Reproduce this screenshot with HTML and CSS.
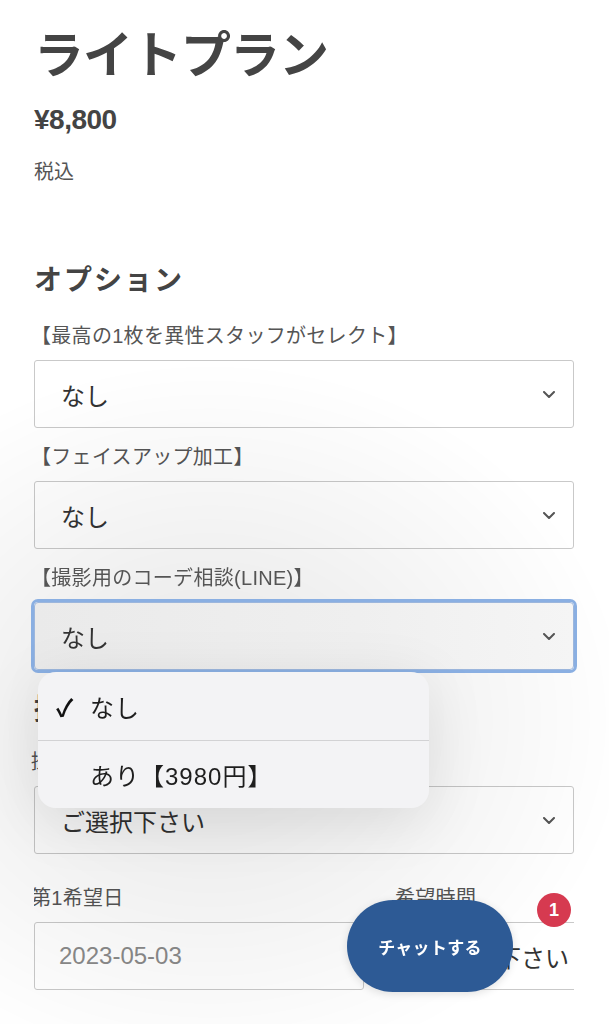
FILE: index.html
```html
<!DOCTYPE html>
<html lang="ja">
<head>
<meta charset="utf-8">
<meta name="viewport" content="width=device-width, initial-scale=1">
<title>ライトプラン</title>
<link rel="stylesheet" href="styles.css">
</head>
<body>
<main class="page">
  <h1 class="plan-title">ライトプラン</h1>
  <p class="price">¥8,800</p>
  <p class="tax">税込</p>

  <section class="options">
    <h2 class="section-title">オプション</h2>

    <div class="field">
      <label class="field-label">【最高の1枚を異性スタッフがセレクト】</label>
      <div class="select">
        <span class="select-value">なし</span>
        <svg class="chevron" viewBox="0 0 12 7" aria-hidden="true"><path d="M1 1l5 5 5-5"/></svg>
      </div>
    </div>

    <div class="field">
      <label class="field-label">【フェイスアップ加工】</label>
      <div class="select">
        <span class="select-value">なし</span>
        <svg class="chevron" viewBox="0 0 12 7" aria-hidden="true"><path d="M1 1l5 5 5-5"/></svg>
      </div>
    </div>

    <div class="field field-open">
      <label class="field-label">【撮影用のコーデ相談(LINE)】</label>
      <div class="select is-focused">
        <span class="select-value">なし</span>
        <svg class="chevron" viewBox="0 0 12 7" aria-hidden="true"><path d="M1 1l5 5 5-5"/></svg>
      </div>
      <ul class="picker">
        <li class="picker-item is-checked"><span class="check">✓</span>なし</li>
        <li class="picker-item">あり【3980円】</li>
      </ul>
    </div>
  </section>

  <section class="schedule">
    <h2 class="section-title">撮影希望日</h2>
    <div class="field">
      <label class="field-label">撮影場所</label>
      <div class="select">
        <span class="select-value">ご選択下さい</span>
        <svg class="chevron" viewBox="0 0 12 7" aria-hidden="true"><path d="M1 1l5 5 5-5"/></svg>
      </div>
    </div>

    <div class="date-row">
      <div class="date-col">
        <label class="field-label">第1希望日</label>
        <div class="date-input">2023-05-03</div>
      </div>
      <div class="date-col">
        <label class="field-label">希望時間</label>
        <div class="select select-time">
          <span class="select-value">ご選択下さい</span>
        </div>
      </div>
    </div>
  </section>
</main>

<div class="haze"></div>

<button class="chat-button" type="button">チャットする</button>
<span class="chat-badge">1</span>
</body>
</html>
```
FILE: styles.css
```css
* {
  box-sizing: border-box;
}

html, body {
  margin: 0;
  padding: 0;
  background: #ffffff;
}

body {
  font-family: "Liberation Sans", "Noto Sans CJK JP", sans-serif;
  color: #444444;
  overflow: hidden;
  height: 1024px;
}

.page {
  padding: 0 35px 0 34px;
}

.plan-title {
  margin: 26px 0 0;
  font-size: 50px;
  line-height: 60px;
  font-weight: 700;
  color: #444444;
  letter-spacing: -1px;
}

.price {
  margin: 16px 0 0;
  font-size: 28px;
  line-height: 36px;
  font-weight: 700;
  color: #444444;
  letter-spacing: -0.5px;
}

.tax {
  margin: 20px 0 0;
  font-size: 20px;
  line-height: 28px;
  color: #555555;
}

.section-title {
  margin: 0;
  font-size: 28px;
  line-height: 40px;
  font-weight: 700;
  color: #444444;
  letter-spacing: 2px;
}

.options {
  margin-top: 75px;
}

.options .section-title {
  margin-bottom: 21px;
}

.field {
  margin-bottom: 15px;
}

.field-label {
  display: block;
  font-size: 20px;
  line-height: 28px;
  color: #555555;
  letter-spacing: 0.3px;
  margin-bottom: 10px;
  margin-left: -3px;
}

.select {
  position: relative;
  display: flex;
  align-items: center;
  justify-content: space-between;
  height: 68px;
  padding: 0 18px 0 26px;
  border: 1px solid #c9c9c9;
  border-radius: 3px;
  background: #ffffff;
}

.select-value {
  font-size: 24px;
  color: #333333;
}

.chevron {
  width: 12px;
  height: 7px;
  fill: none;
  stroke: #555555;
  stroke-width: 2;
  stroke-linecap: round;
  stroke-linejoin: round;
}

/* open select with its native picker */
.field-open {
  position: relative;
  z-index: 3;
}

.select.is-focused {
  background: linear-gradient(90deg, #eaeaea 0%, #efefef 60%, #f5f5f5 100%);
  box-shadow: 0 0 0 3px #8aafe2;
  border-color: #9cb6dc;
  border-radius: 4px;
}

.picker {
  position: absolute;
  left: 4px;
  top: calc(100% + 2px);
  width: 391px;
  margin: 0;
  padding: 0;
  list-style: none;
  background: #f3f3f5;
  border-radius: 18px;
  box-shadow: 0 12px 60px rgba(0, 0, 0, 0.10);
}

.picker-item {
  position: relative;
  display: flex;
  align-items: center;
  height: 68px;
  padding-left: 52px;
  font-size: 24px;
  letter-spacing: 1px;
  color: #1e1e1e;
}

.picker-item + .picker-item {
  border-top: 1px solid #d2d2d4;
}

.check {
  position: absolute;
  left: 18px;
  font-size: 24px;
  font-weight: 700;
  color: #111111;
}

.schedule {
  margin-top: 20px;
}

.schedule .section-title {
  margin-bottom: 18px;
}

.date-row {
  display: grid;
  grid-template-columns: 330px 330px;
  column-gap: 34px;
  overflow: hidden;
  margin-top: 30px;
}

.date-input {
  display: flex;
  align-items: center;
  height: 68px;
  padding-left: 24px;
  border: 1px solid #c9c9c9;
  border-radius: 3px;
  font-size: 24px;
  color: #8a8a8a;
  background: #ffffff;
}

.select-time {
  padding-left: 26px;
}

.haze {
  position: fixed;
  inset: 0;
  z-index: 2;
  pointer-events: none;
  background:
    radial-gradient(ellipse 420px 360px at 210px 720px, rgba(0, 0, 0, 0.10), rgba(0, 0, 0, 0) 100%);
}

.chat-button {
  position: fixed;
  left: 347px;
  top: 900px;
  z-index: 4;
  width: 166px;
  height: 92px;
  border: none;
  border-radius: 46px;
  background: #2d5a95;
  color: #ffffff;
  font-family: "Noto Sans CJK JP", sans-serif;
  font-size: 17px;
  font-weight: 700;
  letter-spacing: 0.3px;
  box-shadow: 0 2px 8px rgba(0, 0, 0, 0.12);
}

.chat-badge {
  position: fixed;
  left: 537px;
  top: 893px;
  z-index: 4;
  width: 34px;
  height: 34px;
  border-radius: 50%;
  background: #d63a50;
  color: #ffffff;
  font-family: "Liberation Sans", sans-serif;
  font-size: 18px;
  font-weight: 700;
  line-height: 34px;
  text-align: center;
}
```
